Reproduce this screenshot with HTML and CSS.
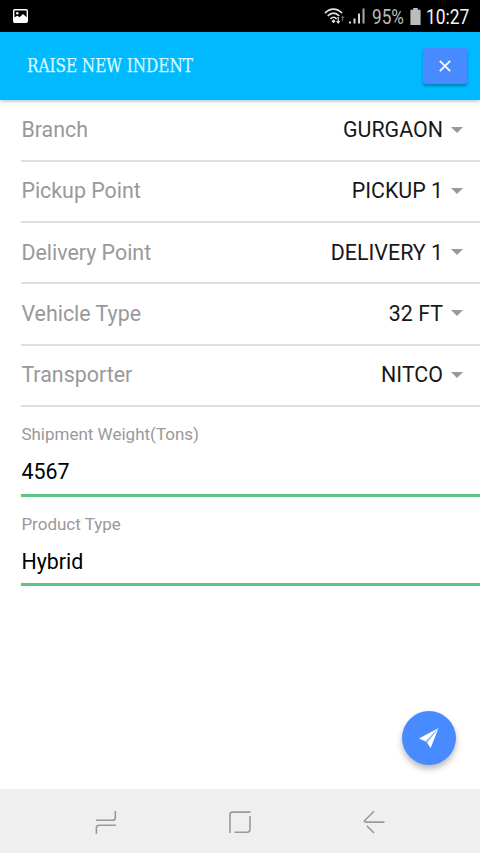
FILE: index.html
```
<!DOCTYPE html>
<html lang="en">
<head>
    <meta charset="UTF-8">
    <meta name="viewport" content="width=device-width, initial-scale=1.0">
    <title>Raise New Indent</title>
    <link rel="stylesheet" href="styles.css">
</head>
<body>
    <div class="status-bar">
        <svg class="picture-icon" viewBox="0 0 15 14">
            <rect x="0.7" y="0.7" width="13.6" height="12.6" rx="1.2" fill="#000" stroke="#fff" stroke-width="1.4"/>
            <path d="M1 13V8.5L4.5 6.8L6.5 8.2L10 5L14 8.5V13Z" fill="#fff"/>
            <circle cx="4.3" cy="4.2" r="1.2" fill="#fff"/>
        </svg>
        <div class="status-right">
            <svg class="wifi-icon" viewBox="0 0 22 18" fill="none" stroke="#e4e4e4" stroke-width="1.7">
                <path d="M1 6.2C6 0.8 13 0.8 18 6.2"/>
                <path d="M3.7 9C7.5 5.2 11.5 5.2 15.3 9"/>
                <path d="M6.4 11.8C8.6 9.7 10.6 9.7 12.6 11.8"/>
                <path d="M9.5 12.3L11.5 14.2L9.5 16.2L7.5 14.2Z" fill="#e4e4e4" stroke="none"/>
                <path d="M14.2 10V16M12.6 14L14.2 16L15.8 14" stroke-width="1.2"/>
                <path d="M18.6 14V9M17.4 10.8L18.6 9.3L19.8 10.8" stroke="#777" stroke-width="1"/>
            </svg>
            <svg class="signal-icon" viewBox="0 0 16 16">
                <path d="M0 13.5h2v2H0zM4.5 10.5h2v5h-2zM9 5.5h2v10H9z" fill="#d8d8d8"/>
                <path d="M13.5 0.5h2v15h-2z" fill="#aaa"/>
            </svg>
            <span class="battery-text">95%</span>
            <svg class="battery-icon" viewBox="0 0 11 17">
                <path d="M3.2 0h4.6v1.8H10.6V17H0.4V1.8H3.2Z" fill="#bcbcbc"/>
            </svg>
            <span class="clock">10:27</span>
        </div>
    </div>

    <header class="header">
        <h1 class="title">RAISE NEW INDENT</h1>
        <button class="close-btn" aria-label="Close">
            <svg viewBox="0 0 12 12"><path d="M0.8 0.8L11.2 11.2M11.2 0.8L0.8 11.2" stroke="#fff" stroke-width="1.7"/></svg>
        </button>
    </header>

    <main class="content">
        <div class="row"><span class="label">Branch</span><span class="value">GURGAON</span><i class="caret"></i></div>
        <div class="row"><span class="label">Pickup Point</span><span class="value">PICKUP 1</span><i class="caret"></i></div>
        <div class="row"><span class="label">Delivery Point</span><span class="value">DELIVERY 1</span><i class="caret"></i></div>
        <div class="row"><span class="label">Vehicle Type</span><span class="value">32 FT</span><i class="caret"></i></div>
        <div class="row"><span class="label">Transporter</span><span class="value">NITCO</span><i class="caret"></i></div>
        <div class="field">
            <label for="weight">Shipment Weight(Tons)</label>
            <input type="text" id="weight" value="4567">
        </div>
        <div class="field">
            <label for="product">Product Type</label>
            <input type="text" id="product" value="Hybrid">
        </div>
        <button class="send-btn" aria-label="Send">
            <svg viewBox="0 0 20 20">
                <path d="M19.6 0L0 10.4L6.6 13.4Z" fill="#fff"/>
                <path d="M19.6 0L8.6 14L11.6 20Z" fill="#fff"/>
                <path d="M7.6 14L11.6 20L10.5 15Z" fill="#fff"/>
                <path d="M6.6 13.4L19.6 0L8.6 14.4Z" fill="#a9bfe4"/>
            </svg>
        </button>
    </main>

    <nav class="nav-bar">
        <svg viewBox="0 0 24 24"><path d="M2 11.2H18.5Q21.3 11.2 21.3 8.4V2M22 16.3H5Q2.4 16.3 2.4 19V25"/></svg>
        <svg viewBox="0 0 24 24"><path d="M2 24V5.5Q2 3.1 4.4 3.1H22.5M22 7V20.6Q22 23.2 19.4 23.2H6.5"/></svg>
        <svg viewBox="0 0 24 24"><path d="M12 2.3L2.3 12L3.4 13.1H22.5M4.8 16.8L12 24"/></svg>
    </nav>
</body>
</html>
```
FILE: styles.css
```
* {
    box-sizing: border-box;
}
body {
    margin: 0;
    height: 853px;
    display: flex;
    flex-direction: column;
    font-family: Roboto, sans-serif;
    background: #fff;
    color: #181818;
    overflow: hidden;
}
svg {
    display: block;
    overflow: visible;
}
button {
    border: none;
    padding: 0;
    display: flex;
    align-items: center;
    justify-content: center;
    background: #488aff;
}
.status-bar {
    height: 32px;
    flex: none;
    display: flex;
    align-items: center;
    justify-content: space-between;
    padding: 0 11px 0 13px;
    background: #000;
}
.picture-icon {
    width: 15px;
    height: 14px;
}
.status-right {
    display: flex;
    align-items: center;
}
.wifi-icon {
    width: 22px;
    height: 18px;
    margin-right: 3px;
}
.signal-icon {
    width: 16px;
    height: 16px;
    margin-right: 7px;
}
.battery-text, .clock {
    font-size: 20px;
    line-height: 32px;
    padding-top: 2px;
    white-space: nowrap;
    transform-origin: left center;
}
.battery-text {
    width: 32px;
    color: #bcbcbc;
    transform: scaleX(0.86);
    margin-right: 6px;
}
.battery-icon {
    width: 11px;
    height: 17px;
    margin-right: 5px;
}
.clock {
    width: 43px;
    color: #f4f4f4;
    transform: scaleX(0.87);
}
.header {
    height: 68px;
    flex: none;
    display: flex;
    align-items: center;
    justify-content: space-between;
    padding: 0 13px 0 26.5px;
    background: #00b9ff;
    box-shadow: 0 1px 4px rgba(0, 90, 100, 0.4);
    z-index: 1;
}
.title {
    margin: 0;
    padding-bottom: 1px;
    font-family: "Roboto Slab", "DejaVu Serif Condensed", "DejaVu Serif", serif;
    font-stretch: condensed;
    font-size: 18px;
    font-weight: 400;
    color: #d5fbff;
    -webkit-text-stroke: 0.25px #d5fbff;
    white-space: nowrap;
    transform: scaleX(0.94);
    transform-origin: left center;
}
.close-btn {
    width: 44px;
    height: 36px;
    border-radius: 2px;
    box-shadow: 0 2px 3px rgba(0, 0, 0, 0.3);
}
.close-btn svg {
    width: 12px;
    height: 12px;
}
.content {
    flex: 1;
    position: relative;
    padding: 0.6px 0 0 21.4px;
}
.row {
    height: 61.3px;
    display: flex;
    align-items: center;
    padding: 0 17px 1.4px 0;
    border-bottom: 2px solid #dedede;
    font-size: 21.4px;
}
.label {
    flex: 1;
    color: #999;
}
.caret {
    margin-left: 8px;
    border: 6.5px solid transparent;
    border-top: 6px solid #999;
    border-bottom: 0;
}
.field {
    height: 89.7px;
    padding-top: 16px;
    border-bottom: 3px solid #5bc583;
}
.field label {
    display: block;
    font-size: 17px;
    line-height: 22px;
    color: #999;
}
.field input {
    display: block;
    width: 100%;
    height: 30px;
    margin-top: 11.5px;
    padding: 0;
    border: none;
    outline: none;
    background: none;
    font-family: inherit;
    font-size: 21.4px;
    color: #000;
}
.send-btn {
    position: absolute;
    right: 24px;
    bottom: 24px;
    width: 54px;
    height: 54px;
    border-radius: 50%;
    box-shadow: 0 4px 6px rgba(0, 0, 0, 0.28);
}
.send-btn svg {
    width: 20px;
    height: 20px;
}
.nav-bar {
    height: 64px;
    flex: none;
    display: flex;
    align-items: center;
    justify-content: center;
    gap: 110px;
    background: #efefef;
}
.nav-bar svg {
    width: 24px;
    height: 24px;
    fill: none;
    stroke: #999;
    stroke-width: 1.6;
}
```
